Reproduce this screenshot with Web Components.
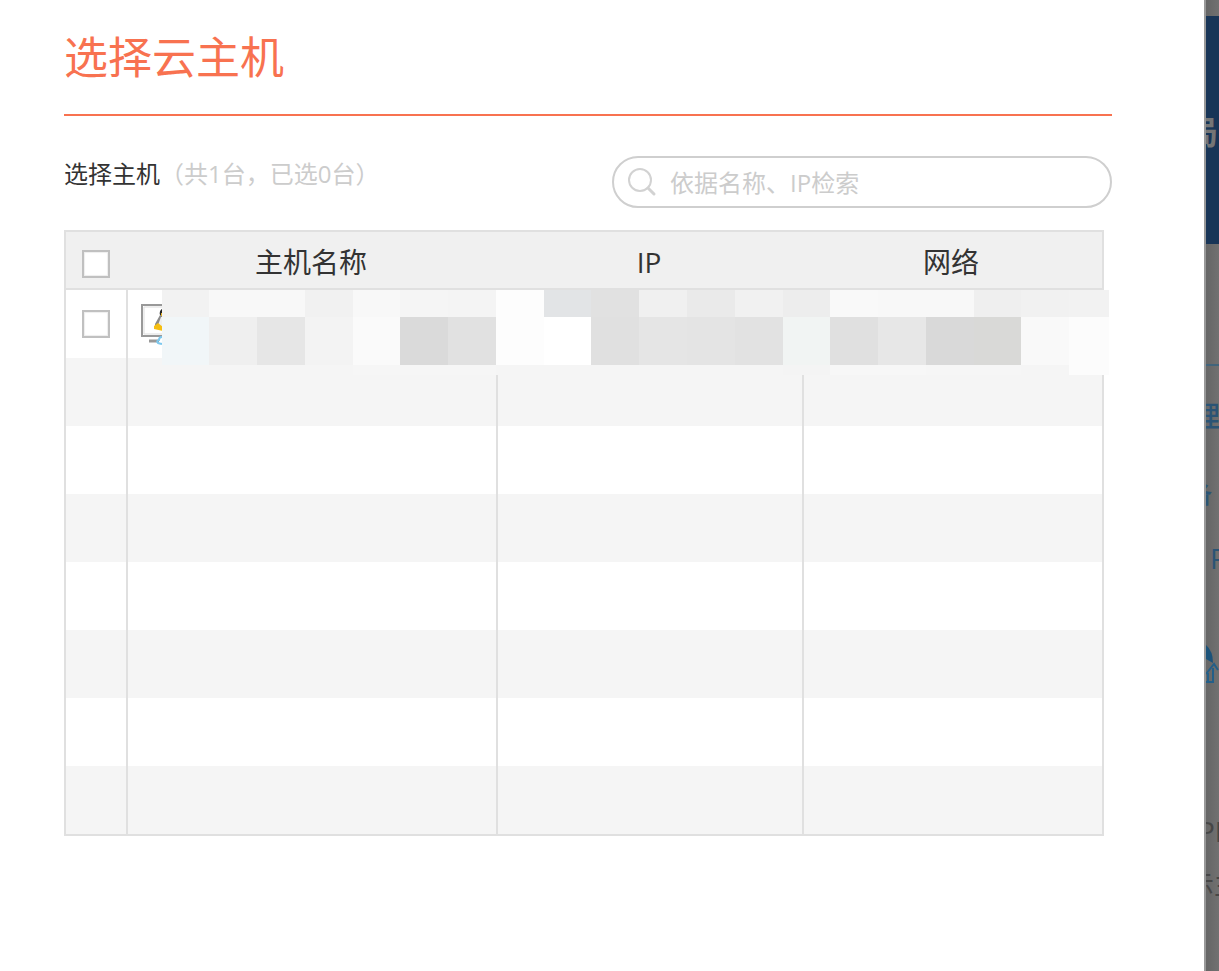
<!DOCTYPE html>
<html lang="zh-CN">
<head>
<meta charset="utf-8">
<title>选择云主机</title>
<style>
body { margin: 0; font-family: "Open Sans", "Noto Sans CJK SC", sans-serif; color: #333; background: #fff; }
</style>
</head>
<body>
<app-shell>
  <host-dialog>
    <host-search slot="search"></host-search>
    <host-table></host-table>
  </host-dialog>
  <page-edge slot="behind"></page-edge>
</app-shell>
<script>
class Base extends HTMLElement {
  constructor() {
    super();
    this.attachShadow({ mode: 'open' }).innerHTML = this.constructor.html;
  }
}

customElements.define('app-shell', class extends Base {
  static html = `<style>
    :host { display: grid; grid-template-columns: minmax(0, 1fr) 15px; min-height: 100vh; }
  </style><slot></slot><slot name="behind"></slot>`;
});

customElements.define('host-dialog', class extends Base {
  static html = `<style>
    :host { display: block; padding: 24px 92px 64px 64px; background: #fff; }
    h1 { margin: 0; height: 90px; border-bottom: 2px solid #f87250; font-size: 44px; line-height: 66px; font-weight: 400; color: #f87250; }
    .bar { display: flex; justify-content: space-between; padding: 40px 0 22px; }
    p { margin: 0; font-size: 24px; line-height: 36px; }
    .count { color: #ccc; }
  </style>
  <h1>选择云主机</h1>
  <div class="bar"><p>选择主机<span class="count">（共1台，已选0台）</span></p><slot name="search"></slot></div>
  <slot></slot>`;
});

customElements.define('host-search', class extends Base {
  static html = `<style>
    :host { display: block; width: 500px; }
    label { box-sizing: border-box; display: flex; align-items: center; gap: 12px; height: 52px; padding: 0 14px; border: 2px solid #cfcfcf; border-radius: 26px; }
    svg { flex: none; }
    input { flex: 1; min-width: 0; height: 44px; padding: 0; border: 0; outline: 0; background: none; box-sizing: border-box; font: inherit; font-size: 24px; color: #333; }
    input::placeholder { color: #ccc; opacity: 1; }
  </style>
  <label><svg width="30" height="30" viewBox="0 0 30 30" fill="none" stroke="#d2d2d2" aria-hidden="true"><circle cx="12" cy="13" r="11" stroke-width="2"/><path d="M20 21l6 6" stroke-width="3" stroke-linecap="round"/></svg>
  <input type="text" placeholder="依据名称、IP检索" aria-label="依据名称、IP检索"></label>`;
});

customElements.define('host-table', class extends Base {
  static html = `<style>
    :host { display: block; position: relative; margin-right: 8px; }
    table { width: 100%; table-layout: fixed; border-collapse: separate; border-spacing: 0; border: 2px solid #e0e0e0; }
    .c1 { width: 62px; } .c2 { width: 370px; } .c3 { width: 306px; }
    th { box-sizing: border-box; height: 58px; padding: 4px 4px 0 0; border-bottom: 2px solid #e0e0e0; background: #f0f0f0; font-size: 28px; line-height: 42px; font-weight: 400; }
    td { box-sizing: border-box; height: 68px; padding: 0; border-right: 2px solid #e0e0e0; }
    td:last-child { border-right: 0; }
    tbody tr:nth-child(even) { background: #f5f5f5; }
    input { appearance: none; display: block; box-sizing: border-box; width: 28px; height: 28px; margin: 0 0 0 16px; border: 2px solid #c0c0c0; background: #fff; box-shadow: inset 0 0 1px 1px #eee; }
    th input { margin-top: 4px; }
    .os { display: block; margin-left: 12px; }
    .mosaic { position: absolute; left: 98px; top: 60px; }
  </style>
  <table>
    <colgroup><col class="c1"><col class="c2"><col class="c3"><col></colgroup>
    <thead><tr><th><input type="checkbox" aria-label="全选"></th><th>主机名称</th><th>IP</th><th>网络</th></tr></thead>
    <tbody></tbody>
  </table>
  <svg class="mosaic" width="947" height="85" viewBox="0 0 947 85" shape-rendering="crispEdges" aria-hidden="true"></svg>`;
  constructor() {
    super();
    const icon = `<svg class="os" width="44" height="44" viewBox="0 0 44 44" fill="none" aria-hidden="true">
      <path d="M2 3H40V34H2Z" fill="#fff" stroke="#999" stroke-width="2"/>
      <path d="M4 5H38V32H4Z" stroke="#ddd" stroke-width="1"/>
      <path d="M9 39H19" stroke="#999" stroke-width="3"/>
      <path d="M22 35q-3 0-3 3-3 1-1 3 2 1 6 1" stroke="#7cc8ee" stroke-width="2"/>
      <path d="M22 7q-3 2-2 6l-5 9v4h9V7z" fill="#8a8a8a"/><path d="M22 7q-3 2-2 6h4V7z" fill="#222"/>
      <path d="M21 15l-3 8 6 4V15z" fill="#eee"/><path d="M14 24l4-3 5 4v4l-9-2z" fill="#f5be12"/><path d="M21 11h3v3h-3z" fill="#e8b52a"/></svg>`;
    this.shadowRoot.querySelector('tbody').innerHTML =
      `<tr><td><input type="checkbox" aria-label="选择主机"></td><td>${icon}</td><td></td><td></td></tr>` +
      '<tr><td></td><td></td><td></td><td></td></tr>'.repeat(7);
    const x = [0, 47, 95, 143, 191, 238, 286, 334, 382, 429, 477, 525, 573, 621, 668, 716, 764, 812, 859, 907, 947];
    const rows = [
      [0, 27, 'f2f2f2 f8f8f8 f8f8f8 f1f1f1 f8f8f8 f5f5f5 f4f4f4 fdfdfd e2e4e6 e1e1e1 f0f0f0 eaeaea f1f1f1 ededed f9f9f9 f8f8f8 f8f8f8 efefef f1f1f1 f2f2f2'],
      [27, 48, 'f1f6f8 efefef e6e6e6 f3f3f3 fafafa dadada e1e1e1 fdfdfd ffffff e0e0e0 e5e5e5 e4e4e4 e2e2e2 f1f4f3 e0e0e0 e7e7e7 d9d9d9 d9d9d7 f9f9f9 fcfcfc'],
      [75, 10, 'f5f5f5 f5f5f5 f5f5f5 f5f5f5 f6f6f6 f6f6f6 f6f6f6 f5f5f5 f5f5f5 f5f5f5 f5f5f5 f5f5f5 f5f5f5 f4f4f4 f7f7f7 f7f7f7 f6f6f6 f6f6f6 f5f5f5 fcfcfc'],
    ];
    this.shadowRoot.querySelector('.mosaic').innerHTML = rows.map(([y, h, colors]) =>
      colors.split(' ').map((c, i) => `<rect x="${x[i]}" y="${y}" width="${x[i + 1] - x[i]}" height="${h}" fill="#${c}"/>`).join('')).join('');
  }
});

customElements.define('page-edge', class extends Base {
  static html = `<style>
    :host { display: block; overflow: hidden; min-width: 0; border-left: 2px solid #999; background: linear-gradient(90deg, #656565, #717171); }
    div { overflow: hidden; white-space: nowrap; }
    .gap { height: 16px; }
    .banner { height: 228px; background: #183557; color: #757575; font-size: 32px; line-height: 232px; font-weight: 700; text-indent: -20px; }
    .rule { height: 120px; border-bottom: 2px solid #41647b; }
    .nav { color: #2a5475; font-size: 28px; font-weight: 500; }
    .a { height: 100px; line-height: 100px; text-indent: -14px; }
    .b { height: 60px; line-height: 56px; font-size: 24px; font-weight: 700; text-indent: -18px; }
    .c { height: 64px; line-height: 64px; text-indent: 4px; }
    .icon { height: 105px; padding-top: 54px; }
    .text { color: #464646; font-size: 28px; }
    .d { height: 56px; line-height: 56px; text-indent: -8px; margin-top: 54px; }
    .e { height: 50px; line-height: 50px; font-size: 26px; text-indent: -18px; }
    svg { display: block; }
  </style>
  <div class="gap"></div>
  <div class="banner">局</div>
  <div class="rule"></div>
  <div class="nav a">理</div>
  <div class="nav b">备</div>
  <div class="nav c">P</div>
  <div class="icon"><svg width="13" height="42" viewBox="0 0 13 42" fill="none" aria-hidden="true"><path d="M0 1Q7 7 7 19L0 15Z" fill="#1b5279"/><path d="M0 30L8 20L12 26M7 24V38H0M2 29V38" stroke="#245f88" stroke-width="2"/></svg></div>
  <div class="text d">PI</div>
  <div class="text e">示主</div>`;
});
</script>
</body>
</html>
